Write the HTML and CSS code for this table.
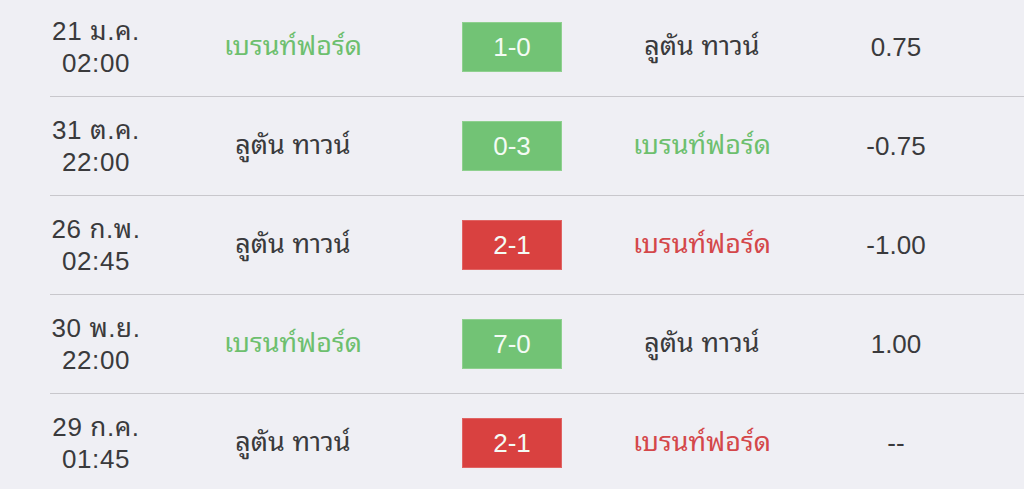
FILE: index.html
```html
<!DOCTYPE html>
<html lang="th">
<head>
<meta charset="utf-8">
<title>ผลการแข่งขัน</title>
<link rel="stylesheet" href="styles.css">
</head>
<body>
<div class="list">
  <div class="row">
    <div class="date">21 ม.ค.<br>02:00</div>
    <div class="team win">เบรนท์ฟอร์ด</div>
    <div class="score-cell"><span class="score green">1-0</span></div>
    <div class="team">ลูตัน ทาวน์</div>
    <div class="hdp">0.75</div>
  </div>
  <div class="divider"></div>
  <div class="row">
    <div class="date">31 ต.ค.<br>22:00</div>
    <div class="team">ลูตัน ทาวน์</div>
    <div class="score-cell"><span class="score green">0-3</span></div>
    <div class="team win">เบรนท์ฟอร์ด</div>
    <div class="hdp">-0.75</div>
  </div>
  <div class="divider"></div>
  <div class="row">
    <div class="date">26 ก.พ.<br>02:45</div>
    <div class="team">ลูตัน ทาวน์</div>
    <div class="score-cell"><span class="score red">2-1</span></div>
    <div class="team lose">เบรนท์ฟอร์ด</div>
    <div class="hdp">-1.00</div>
  </div>
  <div class="divider"></div>
  <div class="row">
    <div class="date">30 พ.ย.<br>22:00</div>
    <div class="team win">เบรนท์ฟอร์ด</div>
    <div class="score-cell"><span class="score green">7-0</span></div>
    <div class="team">ลูตัน ทาวน์</div>
    <div class="hdp">1.00</div>
  </div>
  <div class="divider"></div>
  <div class="row">
    <div class="date">29 ก.ค.<br>01:45</div>
    <div class="team">ลูตัน ทาวน์</div>
    <div class="score-cell"><span class="score red">2-1</span></div>
    <div class="team lose">เบรนท์ฟอร์ด</div>
    <div class="hdp">--</div>
  </div>
</div>
</body>
</html>
```
FILE: styles.css
```css
html, body {
  margin: 0;
  padding: 0;
  background: #efeff4;
}
body {
  font-family: "Liberation Sans", "Noto Sans Thai Looped", "Noto Sans Thai", "Noto Sans", Arial, sans-serif;
  color: #3a3a3c;
  width: 1024px;
  height: 489px;
  overflow: hidden;
}
.list {
  margin-top: -2px;
}
.row {
  display: grid;
  grid-template-columns: 192px 202px 236px 144px 1fr;
  padding-right: 6px;
  height: 98px;
  align-items: center;
  text-align: center;
}
.divider {
  height: 1px;
  margin-left: 50px;
  background: #c8c7cc;
}
.date {
  font-size: 26px;
  line-height: 32px;
  letter-spacing: 0.6px;
}
.team {
  font-size: 27px;
  font-weight: 400;
  line-height: 34px;
  padding-bottom: 2px;
  white-space: nowrap;
}
.team.win {
  color: #6dbf6e;
}
.team.lose {
  color: #d4474a;
}
.score-cell {
  display: flex;
  justify-content: center;
}
.score {
  width: 100px;
  height: 50px;
  display: flex;
  align-items: center;
  justify-content: center;
  color: #f4fbf4;
  font-size: 26px;
  box-sizing: border-box;
}
.score.green {
  background: #72c375;
  border: 1px solid #8fd08f;
}
.score.red {
  background: #d94140;
  border: 1px solid #e06463;
}
.hdp {
  font-size: 26px;
}
```
